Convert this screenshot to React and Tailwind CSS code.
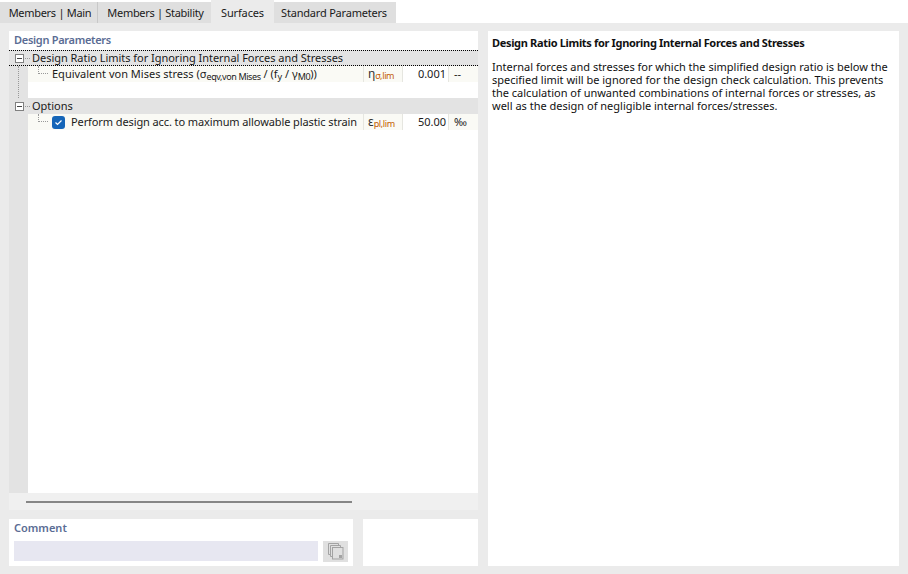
const font = "font-['Noto_Sans','DejaVu_Sans',sans-serif]";

function Tab({ label, active, className }) {
  return (
    <div
      className={`flex items-center justify-center text-[11px] text-[#1a1a1a] ${active ? "h-[23px] bg-[#ebebeb] pt-[3px]" : "mt-[2px] h-[21px] bg-[#dfdfdf] pt-[2px]"} ${className}`}
    >
      {label}
    </div>
  );
}

function Expander() {
  return (
    <div className="flex h-[9px] w-[9px] items-center justify-center border border-[#808080] bg-white">
      <div className="h-px w-[5px] bg-[#444]" />
    </div>
  );
}

function GroupRow({ label, focused }) {
  return (
    <div
      className={`flex h-4 items-center bg-[#e3e3e3] pl-[6px] ${focused ? "border-y border-dotted border-black" : ""}`}
    >
      <Expander />
      <div className="ml-px mr-[2px] w-[5px] border-t border-dotted border-[#999]" />
      <span className="text-[11px] tracking-[-0.03px] text-[#1a1a1a]">{label}</span>
    </div>
  );
}

function ParamRow({ children, symbol, sub, value, unit }) {
  return (
    <div className="flex h-4 bg-white">
      <div className="w-[19px] bg-[#e3e3e3]" />
      <div className="flex flex-1 bg-[#fafaf5]">
        <div className="flex w-[335px] items-center pl-[10px]">
          <div className="mr-[4px] h-[8px] w-[10px] -translate-y-1 border-b border-l border-dotted border-[#999]" />
          {children}
        </div>
        <div className="flex w-[40px] items-center border-x border-[#e6e6e0] pl-[4px] text-[12px] leading-none text-[#333]">
          {symbol}
          <sub className="static mt-[3px] text-[9px] leading-none tracking-[-0.35px] text-[#c25a00]">{sub}</sub>
        </div>
        <div className="flex w-[46px] items-center justify-end border-r border-[#e6e6e0] bg-white pr-[2px] text-[11px] text-[#1a1a1a]">
          {value}
        </div>
        <div className="flex flex-1 items-center pl-[5px] text-[11px] text-[#1a1a1a]">{unit}</div>
      </div>
    </div>
  );
}

function CopyIcon() {
  return (
    <svg width="16" height="17" viewBox="0 0 16 17" fill="none" stroke="#a3a3a3" strokeWidth="1">
      <path d="M2.5 11.5h-2v-11h10v2" />
      <path d="M4.5 13.5h-2v-11h10v2" />
      <rect x="4.5" y="4.5" width="10.5" height="11.5" fill="#e0e0e0" />
      <rect x="11" y="12" width="3" height="3" fill="#a3a3a3" stroke="none" />
    </svg>
  );
}

export default function App() {
  return (
    <div className={`${font} flex h-[574px] w-[908px] flex-col overflow-hidden bg-[#ebebeb]`}>
      <div className="flex h-[23px] bg-white">
        <Tab label={<span className="tracking-[-0.3px]">Members | Main</span>} className="w-[98px] border-r border-[#c8c8c8] pl-[3px]" />
        <Tab label={<span className="tracking-[-0.3px]">Members | Stability</span>} className="w-[113px] pl-[2px]" />
        <Tab label={<span className="tracking-[-0.15px]">Surfaces</span>} active className="w-[63px]" />
        <Tab label={<span className="tracking-[-0.2px]">Standard Parameters</span>} className="w-[122px] pr-[2px]" />
      </div>

      <div className="flex flex-1 gap-[10px] pb-2 pl-[9px] pr-[9px] pt-2">
        <div className="flex w-[469px] flex-col gap-[9px]">
          <div className="flex h-[479px] flex-col bg-white">
            <div className="flex h-[19px] items-center pl-[5px] text-[11px] font-semibold tracking-[-0.3px] text-[#5a6c94]">
              Design Parameters
            </div>
            <div className="relative flex flex-1 flex-col">
              <GroupRow label="Design Ratio Limits for Ignoring Internal Forces and Stresses" focused />
              <ParamRow symbol="η" sub="σ,lim" value="0.001" unit="--">
                <span className="whitespace-nowrap text-[11px] text-[#1a1a1a]">
                  Equivalent von Mises stress (σ
                  <sub className="static align-[-2px] text-[9px] leading-none tracking-[-0.4px]">eqv,von Mises</sub> / (f
                  <sub className="static align-[-2px] text-[9px] leading-none">y</sub> / γ
                  <sub className="static align-[-2px] text-[9px] leading-none tracking-[-0.4px]">M0</sub>))
                </span>
              </ParamRow>
              <div className="flex h-4">
                <div className="w-[19px] bg-[#e3e3e3]" />
              </div>
              <GroupRow label="Options" />
              <ParamRow symbol="ε" sub="pl,lim" value="50.00" unit="‰">
                <div className="mr-[6px] flex h-[13px] w-[13px] items-center justify-center rounded-[3px] bg-[#1565b8]">
                  <svg width="9" height="9" viewBox="0 0 9 9" fill="none" stroke="white" strokeWidth="1.2">
                    <path d="M1.5 4.5l2 2 4-4" />
                  </svg>
                </div>
                <span className="whitespace-nowrap text-[11px] tracking-[-0.1px] text-[#1a1a1a]">
                  Perform design acc. to maximum allowable plastic strain
                </span>
              </ParamRow>
              <div className="flex flex-1">
                <div className="w-[19px] bg-[#e3e3e3]" />
              </div>
              <div className="absolute left-[9px] top-[16px] h-[32px] border-l border-dotted border-[#999]" />
            </div>
            <div className="flex h-[17px] items-center bg-[#f0f0f0] pl-[17px]">
              <div className="h-[2px] w-[326px] bg-[#868686]" />
            </div>
          </div>

          <div className="flex h-[47px] gap-[10px]">
            <div className="flex w-[344px] flex-col bg-white pl-[5px] pr-[5px]">
              <div className="flex h-[19px] items-center text-[11px] font-semibold text-[#5a6c94]">Comment</div>
              <div className="flex gap-[5px] pt-[3px]">
                <div className="h-5 flex-1 bg-[#e7e7f1]" />
                <div className="flex h-[21px] w-[25px] items-center justify-center bg-[#e0e0e0]">
                  <CopyIcon />
                </div>
              </div>
            </div>
            <div className="flex-1 bg-white" />
          </div>
        </div>

        <div className="flex-1 bg-white px-1 pt-[5px] text-[11px] leading-[13px] text-[#111]">
          <div className="h-[13px] whitespace-nowrap font-bold tracking-[-0.33px]">
            Design Ratio Limits for Ignoring Internal Forces and Stresses
          </div>
          <p className="mt-[11px]">
            Internal forces and stresses for which the simplified design ratio is below the specified limit will be
            ignored for the design check calculation. This prevents the calculation of unwanted combinations of
            internal forces or stresses, as well as the design of negligible internal forces/stresses.
          </p>
        </div>
      </div>
    </div>
  );
}
